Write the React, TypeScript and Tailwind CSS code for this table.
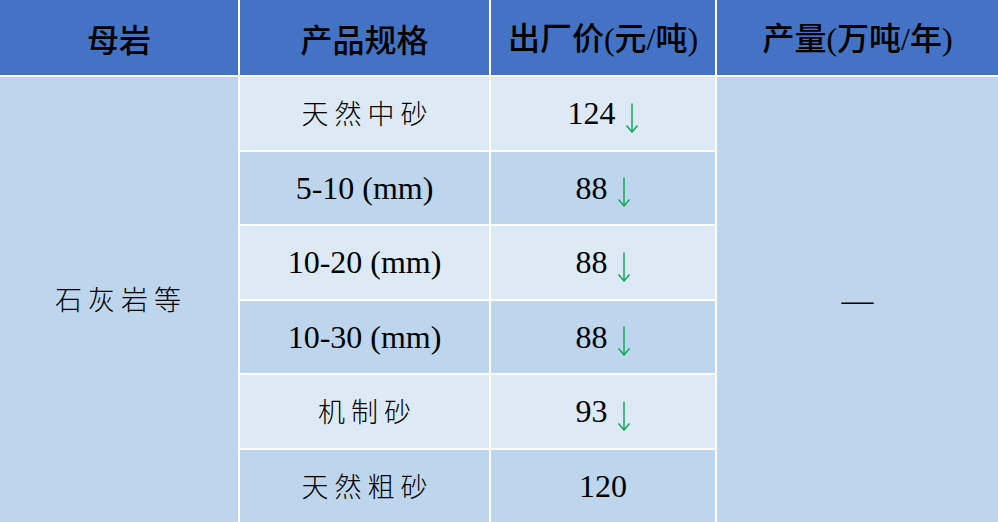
import React from "react";

const cjk = { fontFamily: '"Noto Sans CJK SC", sans-serif' };

function Arrow() {
  return (
    <svg width="14" height="30" viewBox="0 0 14 30" className="ml-[9px] mt-[9px] shrink-0">
      <path d="M7 0.5 V29" stroke="#12a85a" strokeWidth="1.5" fill="none" />
      <path d="M1.5 22.5 L7 29 L12.5 22.5" stroke="#12a85a" strokeWidth="1.5" fill="none" />
    </svg>
  );
}

const rows: { spec: string; zh: boolean; price: string; down: boolean }[] = [
  { spec: "天然中砂", zh: true, price: "124", down: true },
  { spec: "5-10 (mm)", zh: false, price: "88", down: true },
  { spec: "10-20 (mm)", zh: false, price: "88", down: true },
  { spec: "10-30 (mm)", zh: false, price: "88", down: true },
  { spec: "机制砂", zh: true, price: "93", down: true },
  { spec: "天然粗砂", zh: true, price: "120", down: false },
];

function Head({ children }: { children: React.ReactNode }) {
  return (
    <div
      className="bg-[#4472c4] flex items-center justify-center text-[32px] font-medium text-black"
      style={cjk}
    >
      {children}
    </div>
  );
}

const paren = "font-['Liberation_Serif'] font-normal";

export default function App() {
  return (
    <div className="w-[998px] h-[522px] bg-white overflow-hidden">
      <div className="grid grid-cols-[238px_249px_224px_1fr] grid-rows-[75px_repeat(6,1fr)] gap-[2px] h-full">
        <Head>母岩</Head>
        <Head>产品规格</Head>
        <Head>
          <span>
            出厂价<span className={paren}>(</span>元<span className={paren}>/</span>吨<span className={paren}>)</span>
          </span>
        </Head>
        <Head>
          <span>
            产量<span className={paren}>(</span>万吨<span className={paren}>/</span>年<span className={paren}>)</span>
          </span>
        </Head>

        <div
          className="row-start-2 row-span-6 col-start-1 bg-[#bdd6ed] flex items-center justify-center text-[27px] font-light tracking-[6px] text-black pl-[4px]"
          style={cjk}
        >
          石灰岩等
        </div>

        {rows.map((r, i) => {
          const bg = i % 2 === 0 ? "bg-[#dde9f5]" : "bg-[#bdd6ed]";
          return (
            <React.Fragment key={i}>
              <div
                className={`col-start-2 ${bg} flex items-center justify-center text-black ${
                  r.zh
                    ? "font-['Noto_Sans_CJK_SC'] text-[27px] font-light tracking-[6px] pl-[6px]"
                    : "font-['Liberation_Serif'] text-[32px]"
                }`}
                style={{ gridRowStart: i + 2 }}
              >
                {r.spec}
              </div>
              <div
                className={`col-start-3 ${bg} flex items-center justify-center text-black font-['Liberation_Serif'] text-[32px]`}
                style={{ gridRowStart: i + 2 }}
              >
                <span>{r.price}</span>
                {r.down && <Arrow />}
              </div>
            </React.Fragment>
          );
        })}

        <div className="row-start-2 row-span-6 col-start-4 bg-[#bdd6ed] flex items-center justify-center font-['Liberation_Serif'] text-[32px] text-black">
          —
        </div>
      </div>
    </div>
  );
}
